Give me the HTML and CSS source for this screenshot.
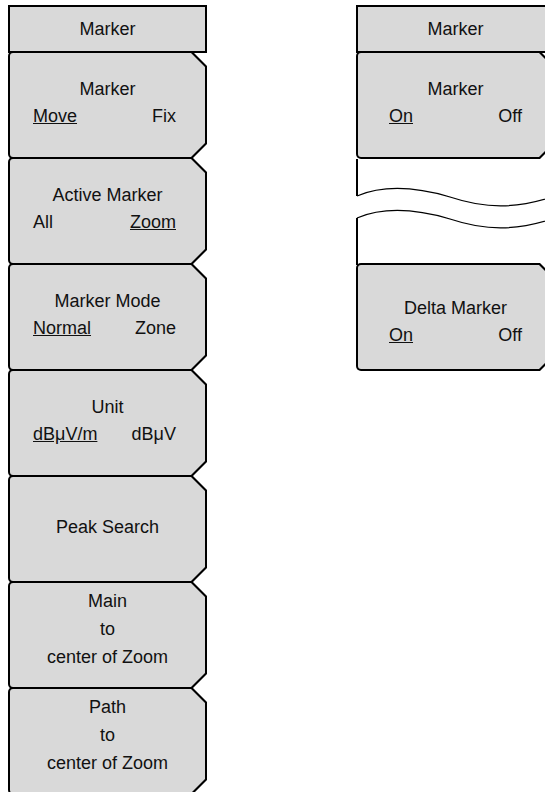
FILE: index.html
```html
<!DOCTYPE html>
<html lang="en">
<head>
    <meta charset="UTF-8">
    <meta name="viewport" content="width=device-width, initial-scale=1.0">
    <title>Marker Menu</title>
    <link rel="stylesheet" href="styles.css">
</head>
<body>
    <div class="panel">
        <div class="panel-head">Marker</div>

        <div class="key">
            <div class="key-face">
                <div class="title">Marker</div>
                <div class="opts"><span class="sel">Move</span><span>Fix</span></div>
            </div>
        </div>
        <div class="key">
            <div class="key-face">
                <div class="title">Active Marker</div>
                <div class="opts"><span>All</span><span class="sel">Zoom</span></div>
            </div>
        </div>
        <div class="key">
            <div class="key-face">
                <div class="title">Marker Mode</div>
                <div class="opts"><span class="sel">Normal</span><span>Zone</span></div>
            </div>
        </div>
        <div class="key">
            <div class="key-face">
                <div class="title">Unit</div>
                <div class="opts"><span class="sel">dBμV/m</span><span>dBμV</span></div>
            </div>
        </div>
        <div class="key">
            <div class="key-face">
                <div class="title">Peak Search</div>
            </div>
        </div>
        <div class="key">
            <div class="key-face key-three">
                <div class="title">Main</div>
                <div class="title">to</div>
                <div class="title">center of Zoom</div>
            </div>
        </div>
        <div class="key">
            <div class="key-face key-three">
                <div class="title">Path</div>
                <div class="title">to</div>
                <div class="title">center of Zoom</div>
            </div>
        </div>
    </div>

    <div class="panel panel-right">
        <div class="panel-head">Marker</div>

        <div class="key">
            <div class="key-face">
                <div class="title">Marker</div>
                <div class="opts opts-wide"><span class="sel">On</span><span>Off</span></div>
            </div>
        </div>

        <!-- break in the key list -->
        <div class="gap">
            <svg width="199" height="106" viewBox="0 0 199 106">
                <path d="M1 0 V37 M1 59 V106" stroke="#000" stroke-width="2" fill="none"/>
                <path d="M1 37 C 20 29, 50 25, 94 38 C 130 50, 160 50, 199 37" stroke="#000" stroke-width="1.3" fill="none"/>
                <path d="M1 59 C 20 51, 50 47, 94 60 C 130 72, 160 72, 199 59" stroke="#000" stroke-width="1.3" fill="none"/>
            </svg>
        </div>

        <div class="key">
            <div class="key-face key-low">
                <div class="title">Delta Marker</div>
                <div class="opts opts-wide"><span class="sel">On</span><span>Off</span></div>
            </div>
        </div>
    </div>
</body>
</html>
```

FILE: styles.css
```css
html, body {
    overflow: hidden;
}

body {
    margin: 0;
    padding: 5px 0 0 8px;
    display: flex;
    gap: 149px;
    background-color: #fff;
    font-family: 'Liberation Sans', Arial, sans-serif;
    font-size: 18px;
    color: #111;
}

.panel {
    width: 199px;
    flex-shrink: 0;
    display: flex;
    flex-direction: column;
}

.panel-head {
    height: 48px;
    box-sizing: border-box;
    border: 2px solid #000;
    background-color: #d9d9d9;
    display: flex;
    justify-content: center;
    align-items: center;
}

.key {
    height: 108px;
    margin-top: -2px;
    padding: 2px;
    box-sizing: border-box;
    background-color: #000;
    border-radius: 5px 0 0 5px;
    clip-path: polygon(0 0, calc(100% - 15px) 0, 100% 15px, 100% calc(100% - 15px), calc(100% - 15px) 100%, 0 100%);
}

.key-face {
    height: 100%;
    box-sizing: border-box;
    padding-bottom: 4px;
    background-color: #d9d9d9;
    border-radius: 3px 0 0 3px;
    clip-path: polygon(0 0, calc(100% - 14px) 0, 100% 14px, 100% calc(100% - 14px), calc(100% - 14px) 100%, 0 100%);
    display: flex;
    flex-direction: column;
    justify-content: center;
    line-height: 27px;
}

.key-three {
    line-height: 28px;
    padding-bottom: 12px;
}

.key-low {
    padding-top: 10px;
    padding-bottom: 0;
}

.title {
    text-align: center;
}

.opts {
    display: flex;
    justify-content: space-between;
    padding: 0 29px 0 23px;
}

.opts-wide {
    padding: 0 31px;
}

.sel {
    text-decoration: underline;
}

.gap {
    height: 106px;
}

.gap svg {
    display: block;
}
```
